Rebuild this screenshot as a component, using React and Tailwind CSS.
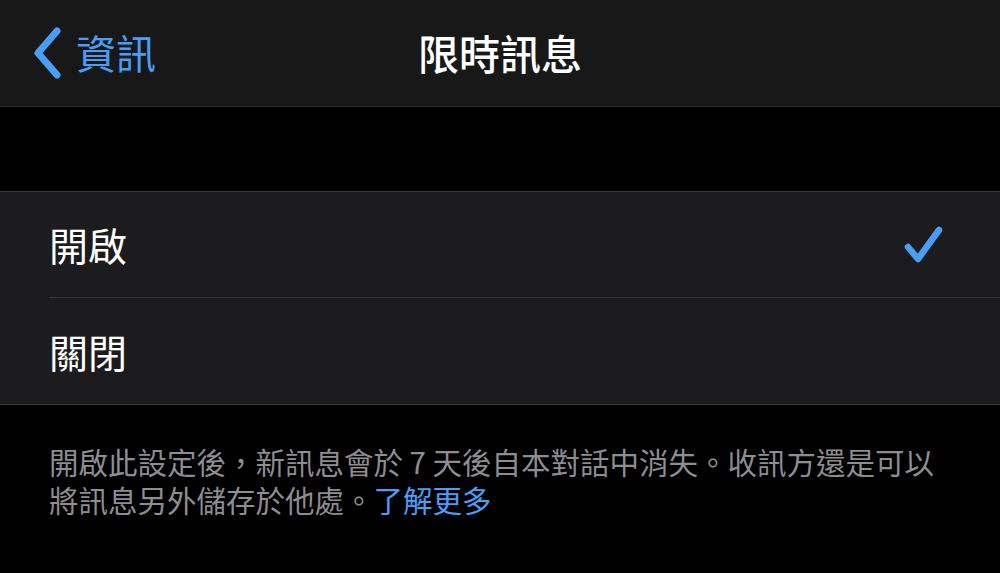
import React from 'react';

const font = { fontFamily: '"Noto Sans CJK TC", "Noto Sans", sans-serif' };

const Check = () => (
    <svg width="40" height="38" viewBox="0 0 40 38" fill="none">
        <path d="M4 21 L14 33 L35 4" stroke="#4a9ef7" strokeWidth="6.5" strokeLinecap="round" strokeLinejoin="round" />
    </svg>
);

const Row = ({ label, checked, last }) => (
    <div className="h-[106px] flex items-center pl-[49px]">
        <div className={`h-full flex-1 flex items-center pr-[56px] ${last ? '' : 'border-b border-[#38383a]'}`}>
            <span className="flex-1 text-[39px] text-white leading-none">{label}</span>
            {checked && <Check />}
        </div>
    </div>
);

export default function App() {
    return (
        <div className="w-[1000px] h-[573px] bg-black overflow-hidden" style={font}>
            <div className="h-[107px] bg-[#181818] border-b border-[#2c2c2e] relative flex items-center justify-center">
                <div className="absolute left-[30px] top-0 h-full flex items-center gap-[10px] text-[#4a9ef7]">
                    <svg width="36" height="54" viewBox="0 0 36 54" fill="none">
                        <path d="M27 5 L8 27 L27 49" stroke="#4a9ef7" strokeWidth="7" strokeLinecap="round" strokeLinejoin="round" />
                    </svg>
                    <span className="text-[40px] leading-none -mt-[2px]">資訊</span>
                </div>
                <span className="text-[41px] font-medium text-white leading-none -mt-[2px]">限時訊息</span>
            </div>
            <div className="h-[84px]" />
            <div className="bg-[#1c1c1e] border-y border-[#38383a]">
                <Row label="開啟" checked />
                <Row label="關閉" last />
            </div>
            <p className="pl-[49px] pr-[20px] pt-[37px] text-[29.5px] leading-[38px] text-[#8d8d93] whitespace-nowrap">
                開啟此設定後，新訊息會於 7 天後自本對話中消失。收訊方還是可以<br />
                將訊息另外儲存於他處。<span className="text-[#4a9ef7]">了解更多</span>
            </p>
        </div>
    );
}
